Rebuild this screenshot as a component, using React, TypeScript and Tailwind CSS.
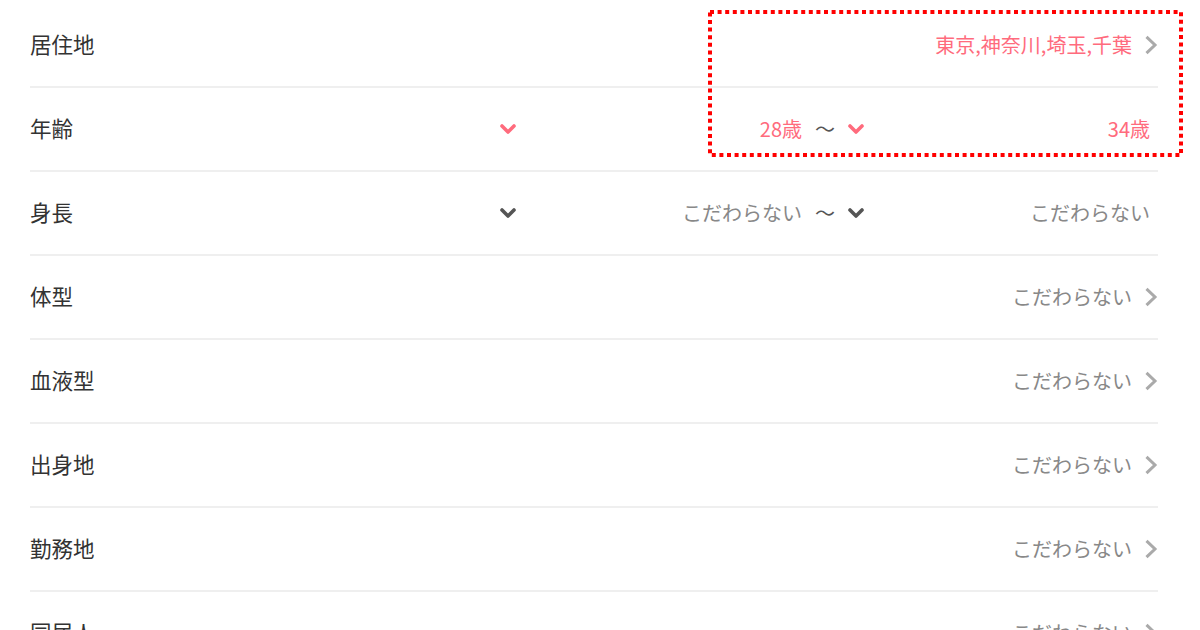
import React from "react";

// Search-condition list: one row per criterion, right side shows the current value.

type Row =
  | { kind: "link"; label: string; value: string; active?: boolean }
  | { kind: "range"; label: string; from: string; to: string; active?: boolean };

const rows: Row[] = [
  { kind: "link", label: "居住地", value: "東京,神奈川,埼玉,千葉", active: true },
  { kind: "range", label: "年齢", from: "28歳", to: "34歳", active: true },
  { kind: "range", label: "身長", from: "こだわらない", to: "こだわらない" },
  { kind: "link", label: "体型", value: "こだわらない" },
  { kind: "link", label: "血液型", value: "こだわらない" },
  { kind: "link", label: "出身地", value: "こだわらない" },
  { kind: "link", label: "勤務地", value: "こだわらない" },
  { kind: "link", label: "同居人", value: "こだわらない" },
];

function ChevronRight() {
  return (
    <svg width="14" height="20" viewBox="0 0 14 20" className="shrink-0">
      <path d="M2.5 1.8 L11 10 L2.5 18.2" fill="none" stroke="#aaaaaa" strokeWidth="3" />
    </svg>
  );
}

function ChevronDown({ active }: { active?: boolean }) {
  return (
    <svg width="16" height="11" viewBox="0 0 16 11" className="shrink-0">
      <path
        d="M2 2 L8 8 L14 2"
        fill="none"
        stroke={active ? "#ff6b7d" : "#555555"}
        strokeWidth="3.6"
        strokeLinecap="round"
        strokeLinejoin="round"
      />
    </svg>
  );
}

function Select({ value, active }: { value: string; active?: boolean }) {
  return (
    <div className="w-[302px] flex items-center justify-between">
      <ChevronDown active={active} />
      <span className={active ? "text-[#ff6b7d]" : "text-[#888]"}>{value}</span>
    </div>
  );
}

export default function App() {
  return (
    <div
      className="relative w-[1200px] h-[630px] overflow-hidden bg-white pl-[30px] pt-[4px] text-[20px] leading-none"
      style={{ fontFamily: '"Noto Sans CJK JP", "Noto Sans", sans-serif' }}
    >
      <div className="w-[1128px]">
        {rows.map((r) => (
          <div
            key={r.label}
            className="h-[84px] flex items-center border-b-2 border-[#efefef]"
          >
            <div className="flex-1 text-[21.5px] text-[#333] -translate-y-[1px]">{r.label}</div>
            {r.kind === "link" ? (
              <div className="flex items-center gap-[12px]">
                <span className={r.active ? "text-[#ff6b7d]" : "text-[#888]"}>{r.value}</span>
                <ChevronRight />
              </div>
            ) : (
              <div className="flex items-center pr-[8px]">
                <Select value={r.from} active={r.active} />
                <span className="w-[46px] text-center text-[#555]">〜</span>
                <Select value={r.to} active={r.active} />
              </div>
            )}
          </div>
        ))}
      </div>

      {/* annotation box over the first two values */}
      <svg
        className="absolute left-[708px] top-[10px] pointer-events-none"
        width="476"
        height="148"
        viewBox="0 0 476 148"
      >
        <rect
          x="2"
          y="2"
          width="471"
          height="143"
          fill="none"
          stroke="#ff0000"
          strokeWidth="4"
          strokeDasharray="4 3.6"
        />
      </svg>
    </div>
  );
}
